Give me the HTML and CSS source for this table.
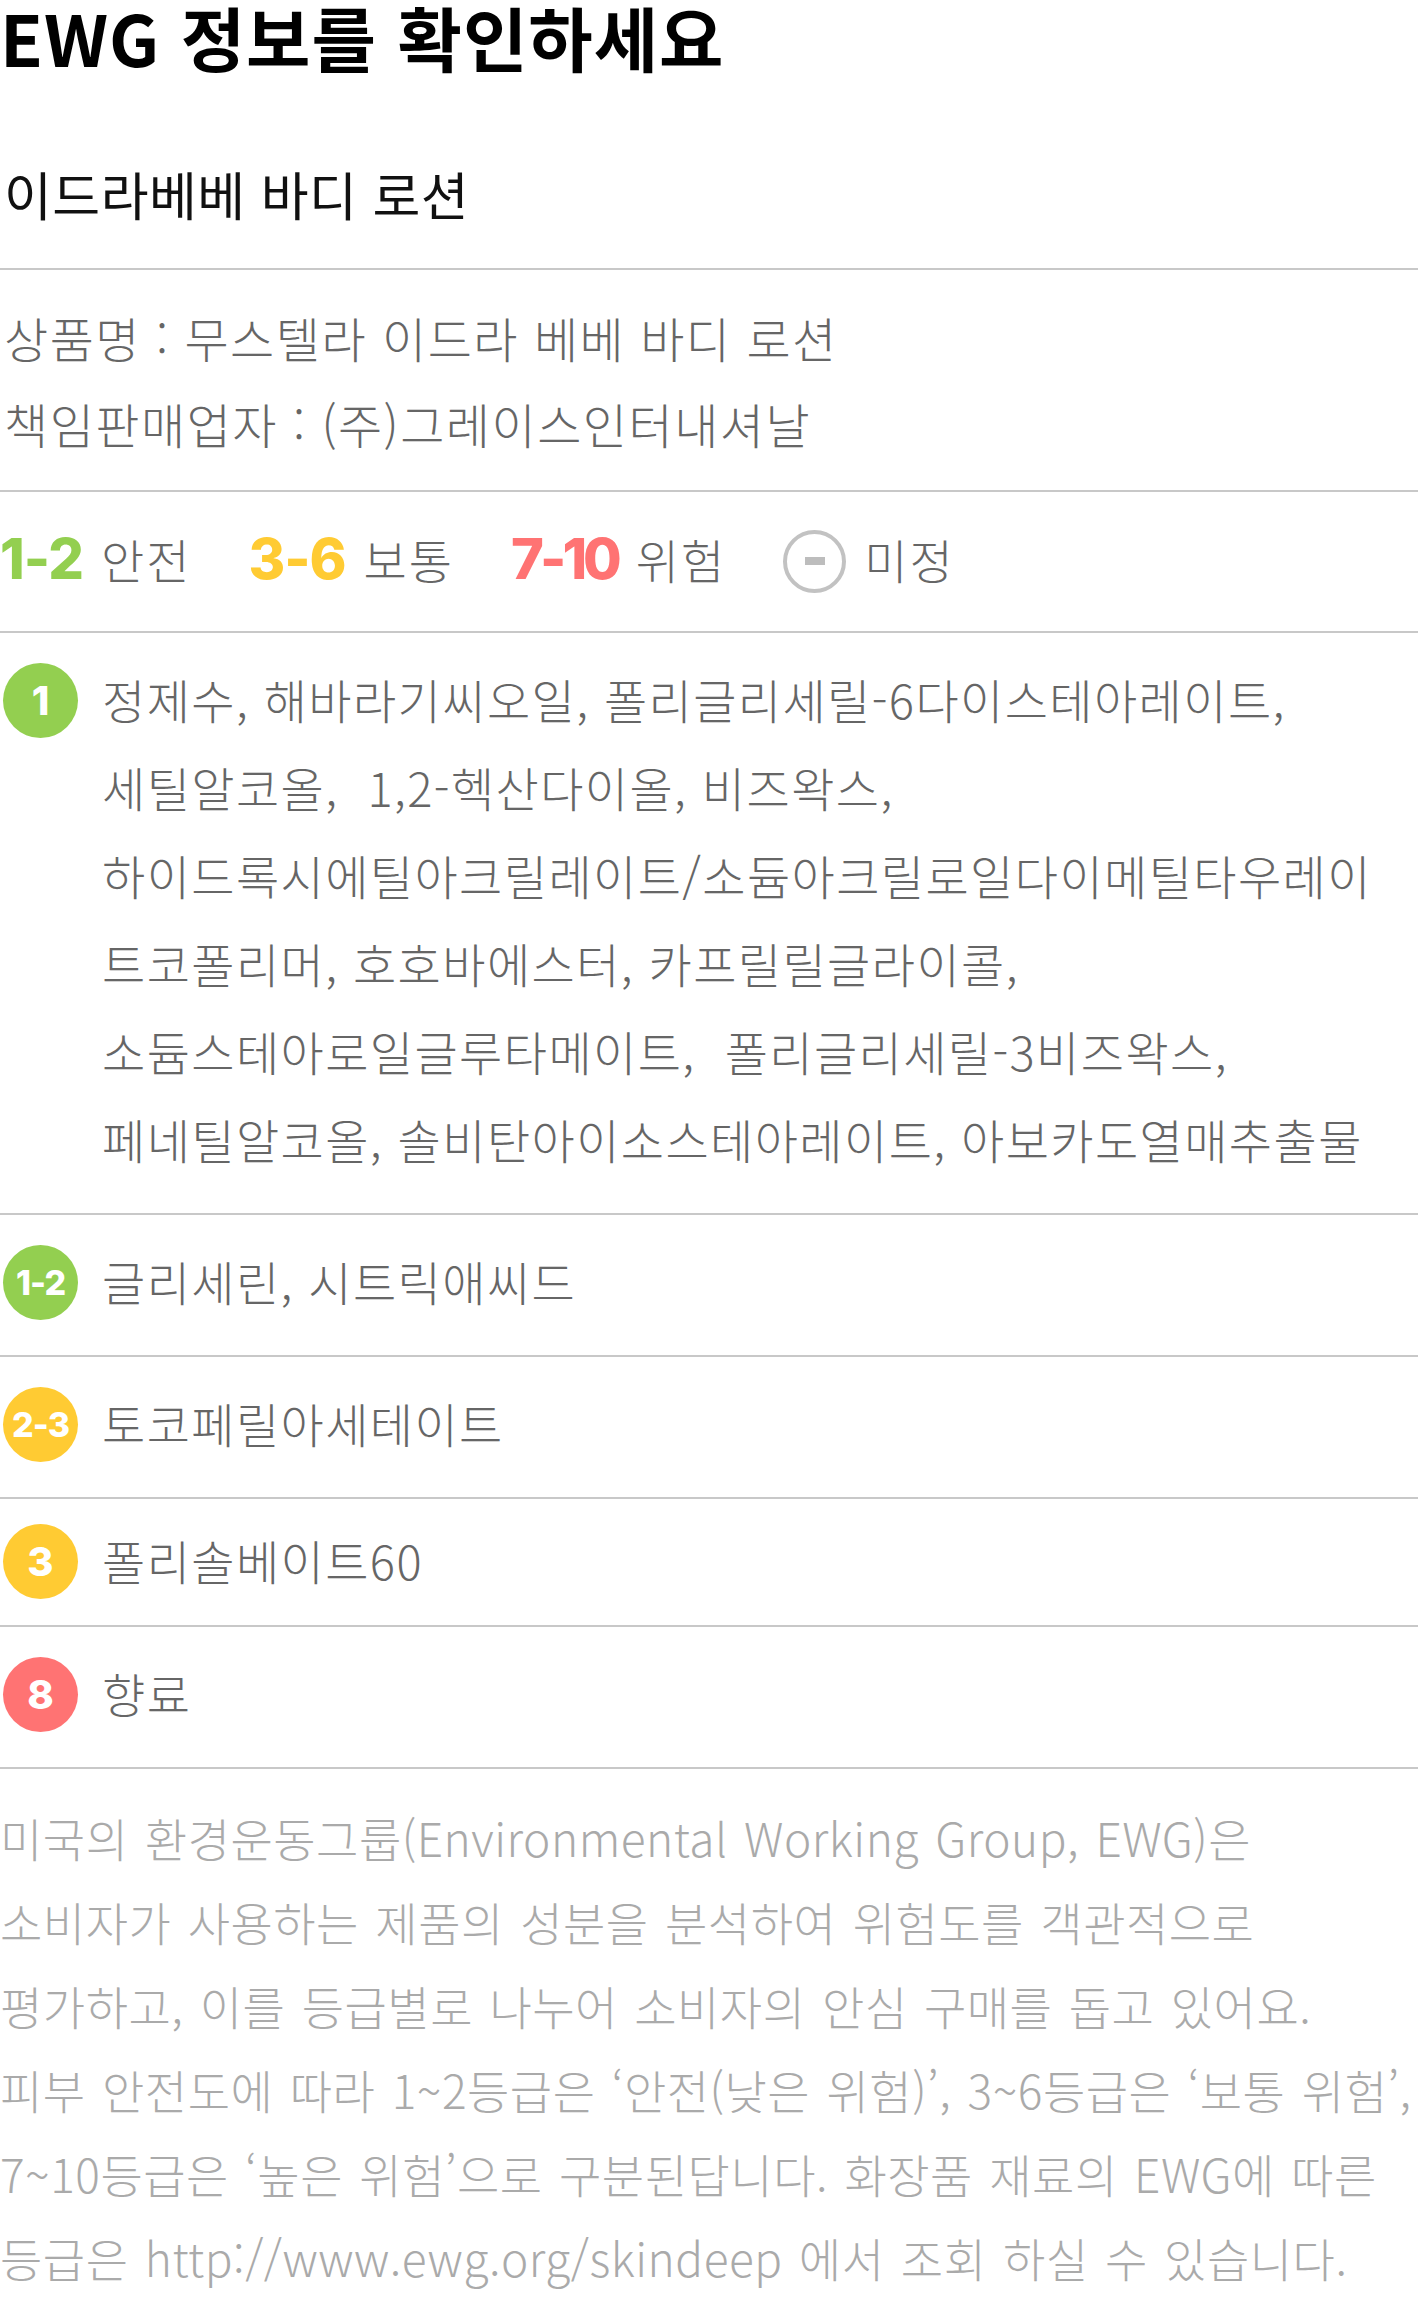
FILE: index.html
```html
<!DOCTYPE html>
<html lang="ko">
<head>
    <meta charset="UTF-8">
    <meta name="viewport" content="width=device-width, initial-scale=1.0">
    <title>EWG 정보를 확인하세요</title>
    <link rel="stylesheet" href="styles.css">
</head>
<body>
    <div class="ewg">
        <h1 class="ewg-title">EWG 정보를 확인하세요</h1>
        <h2 class="product-name">이드라베베 바디 로션</h2>

        <div class="product-info">
            <p>상품명 : 무스텔라 이드라 베베 바디 로션</p>
            <p>책임판매업자 : (주)그레이스인터내셔날</p>
        </div>

        <ul class="legend">
            <li class="legend-item"><b class="legend-num safe">1-2</b>안전</li>
            <li class="legend-item"><b class="legend-num normal">3-6</b>보통</li>
            <li class="legend-item"><b class="legend-num danger">7-10</b>위험</li>
            <li class="legend-item"><span class="legend-unknown"><span></span></span>미정</li>
        </ul>

        <ul class="ingredients">
            <li class="ing-row">
                <span class="grade safe">1</span>
                <p class="ing-text">정제수, 해바라기씨오일, 폴리글리세릴-6다이스테아레이트,<br>세틸알코올,&nbsp; 1,2-헥산다이올, 비즈왁스,<br>하이드록시에틸아크릴레이트/소듐아크릴로일다이메틸타우레이<br>트코폴리머, 호호바에스터, 카프릴릴글라이콜,<br>소듐스테아로일글루타메이트,&nbsp; 폴리글리세릴-3비즈왁스,<br>페네틸알코올, 솔비탄아이소스테아레이트, 아보카도열매추출물</p>
            </li>
            <li class="ing-row">
                <span class="grade safe small">1-2</span>
                <p class="ing-text">글리세린, 시트릭애씨드</p>
            </li>
            <li class="ing-row">
                <span class="grade normal small">2-3</span>
                <p class="ing-text">토코페릴아세테이트</p>
            </li>
            <li class="ing-row tight">
                <span class="grade normal">3</span>
                <p class="ing-text">폴리솔베이트60</p>
            </li>
            <li class="ing-row">
                <span class="grade danger">8</span>
                <p class="ing-text">향료</p>
            </li>
        </ul>

        <p class="ewg-notes">미국의 환경운동그룹(Environmental Working Group, EWG)은<br>소비자가 사용하는 제품의 성분을 분석하여 위험도를 객관적으로<br>평가하고, 이를 등급별로 나누어 소비자의 안심 구매를 돕고 있어요.<br>피부 안전도에 따라 1~2등급은 ‘안전(낮은 위험)’, 3~6등급은 ‘보통 위험’,<br>7~10등급은 ‘높은 위험’으로 구분된답니다. 화장품 재료의 EWG에 따른<br>등급은 http://www.ewg.org/skindeep 에서 조회 하실 수 있습니다.</p>
    </div>
</body>
</html>
```

FILE: styles.css
```css
body {
    font-family: "Noto Sans CJK KR", sans-serif;
    margin: 0;
    padding: 0;
    background-color: #fff;
    color: #666;
}
.ewg {
    padding-right: 2px;
}
ul {
    list-style: none;
    margin: 0;
    padding: 0;
}
p {
    margin: 0;
}
.ewg-title {
    margin: 0;
    padding-top: 2px;
    font-size: 70px;
    line-height: 70px;
    font-weight: 700;
    letter-spacing: 1px;
    color: #000;
}
.product-name {
    margin: 82px 0 0;
    padding: 0 0 34px 4px;
    font-size: 52px;
    line-height: 80px;
    font-weight: 400;
    letter-spacing: 0.5px;
    color: #111;
    border-bottom: 2px solid #c8c8c8;
}
.product-info {
    padding: 24px 0 24px 4px;
    font-size: 48px;
    line-height: 86px;
    font-weight: 300;
    letter-spacing: 1.5px;
    border-bottom: 2px solid #c8c8c8;
}
.legend {
    display: flex;
    align-items: center;
    gap: 57px;
    padding: 23px 0 28px;
    font-size: 47px;
    line-height: 88px;
    font-weight: 300;
    letter-spacing: 2px;
    border-bottom: 2px solid #c8c8c8;
}
.legend-item {
    display: flex;
    align-items: center;
    gap: 18px;
}
.legend-num {
    font-family: "Inter", sans-serif;
    font-size: 56px;
    font-weight: 800;
    letter-spacing: -1px;
}
.legend-num.danger {
    letter-spacing: -4px;
}
.safe {
    color: #93cf50;
}
.normal {
    color: #ffcb33;
}
.danger {
    color: #ff7373;
}
.legend-unknown {
    display: flex;
    align-items: center;
    justify-content: center;
    box-sizing: border-box;
    width: 63px;
    height: 63px;
    margin-top: 4px;
    border: 4px solid #c2c2c2;
    border-radius: 50%;
}
.legend-unknown span {
    width: 20px;
    height: 8px;
    background-color: #bdbdbd;
}
.ing-row {
    display: flex;
    align-items: flex-start;
    gap: 24px;
    padding: 22px 0 30px 3px;
    border-bottom: 2px solid #c8c8c8;
}
.ing-row.tight {
    padding: 17px 0 21px 3px;
}
.grade {
    display: flex;
    align-items: center;
    justify-content: center;
    flex: none;
    width: 75px;
    height: 75px;
    margin-top: 8px;
    border-radius: 50%;
    font-family: "Inter", sans-serif;
    font-size: 40px;
    font-weight: 800;
    color: #fff;
}
.grade.safe {
    background-color: #93cf50;
}
.grade.normal {
    background-color: #ffcb33;
}
.grade.danger {
    background-color: #ff7373;
}
.grade.small {
    font-size: 34px;
    letter-spacing: -1px;
}
.ing-text {
    font-size: 47px;
    line-height: 88px;
    font-weight: 300;
    letter-spacing: 1.4px;
    white-space: nowrap;
    color: #666;
}
.ewg-notes {
    padding-top: 26px;
    font-size: 46px;
    line-height: 84px;
    font-weight: 300;
    letter-spacing: 0.5px;
    word-spacing: 3px;
    white-space: nowrap;
    color: #aaa;
}
```
